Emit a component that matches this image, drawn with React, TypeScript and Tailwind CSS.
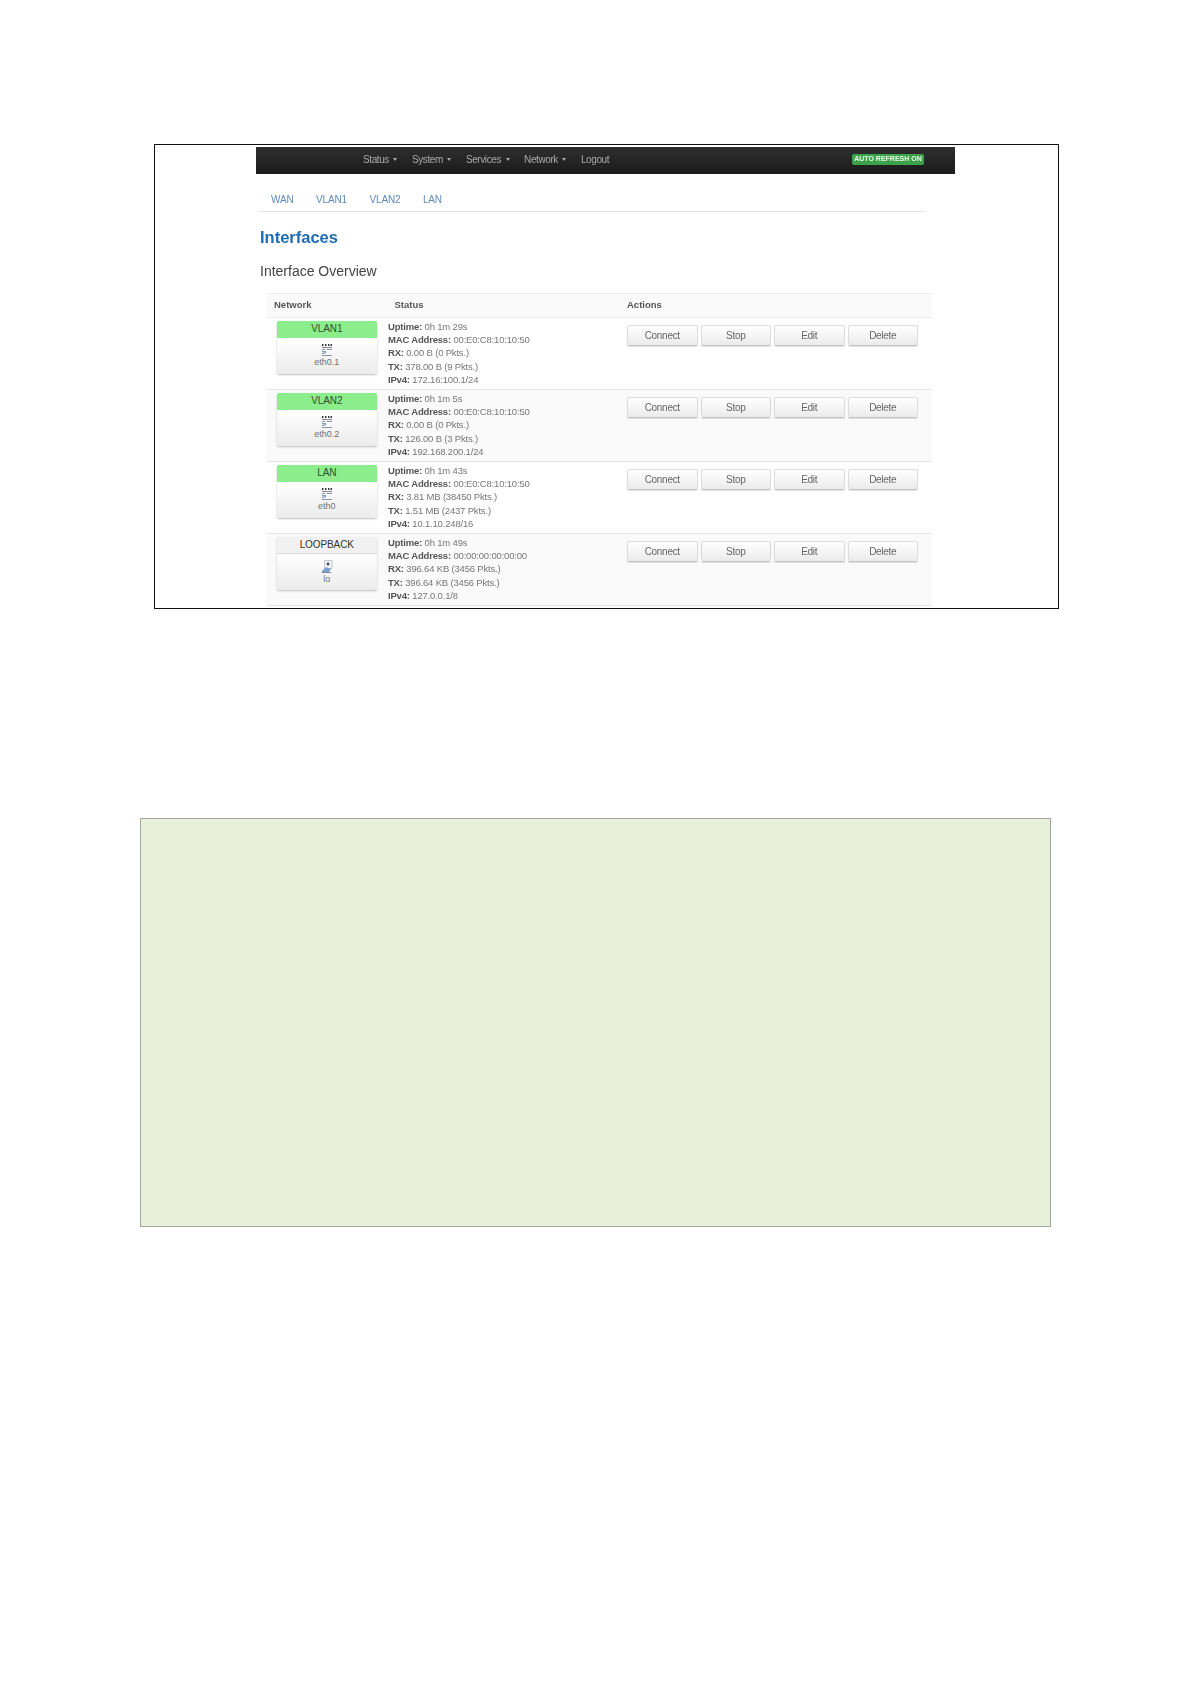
const rows = [
  {
    name: "VLAN1",
    dev: "eth0.1",
    up: true,
    uptime: "0h 1m 29s",
    mac: "00:E0:C8:10:10:50",
    rx: "0.00 B (0 Pkts.)",
    tx: "378.00 B (9 Pkts.)",
    ip: "172.16:100.1/24",
  },
  {
    name: "VLAN2",
    dev: "eth0.2",
    up: true,
    uptime: "0h 1m 5s",
    mac: "00:E0:C8:10:10:50",
    rx: "0.00 B (0 Pkts.)",
    tx: "126.00 B (3 Pkts.)",
    ip: "192.168.200.1/24",
  },
  {
    name: "LAN",
    dev: "eth0",
    up: true,
    uptime: "0h 1m 43s",
    mac: "00:E0:C8:10:10:50",
    rx: "3.81 MB (38450 Pkts.)",
    tx: "1.51 MB (2437 Pkts.)",
    ip: "10.1.10.248/16",
  },
  {
    name: "LOOPBACK",
    dev: "lo",
    up: false,
    uptime: "0h 1m 49s",
    mac: "00:00:00:00:00:00",
    rx: "396.64 KB (3456 Pkts.)",
    tx: "396.64 KB (3456 Pkts.)",
    ip: "127.0.0.1/8",
  },
];

function SwitchIcon() {
  return (
    <svg width="12" height="12" viewBox="0 0 12 12" className="block">
      <path d="M1 0h1.5v2H1zM4 0h1.5v2H4zM7 0h1.5v2H7zM9.5 0H11v2H9.5z" fill="#3a3f47" />
      <path d="M1 3h10v1H1z" fill="#7c8490" />
      <path d="M1 5h3v1H1zM6 5h5v1H6z" fill="#8d95a1" />
      <path d="M1 7h4v1H1z" fill="#7f97bd" />
      <path d="M1 9l4-1v1l-4 1z" fill="#5f82bd" />
      <path d="M1 11h10v1H1z" fill="#8d96a3" />
    </svg>
  );
}

function LoopIcon() {
  return (
    <svg width="12" height="13" viewBox="0 0 12 13" className="block">
      <path d="M3.5.5h7.5v8H3.5z" fill="#f4f5f7" stroke="#c2c6cc" />
      <circle cx="7" cy="4" r="1.4" fill="#3f454d" />
      <path d="M1 11l4-4 5 2-2 3H1z" fill="#7f9fd0" />
      <path d="M1 12.5h9" stroke="#7a8494" />
    </svg>
  );
}

function NavItem({ label, caret = true }: { label: string; caret?: boolean }) {
  return (
    <span className="flex items-center gap-[4.5px]">
      {label}
      {caret && <span className="h-0 w-0 border-x-[2.5px] border-t-[3px] border-x-transparent border-t-[#a8a8a8]" />}
    </span>
  );
}

function ActionButton({ label }: { label: string }) {
  return (
    <button className="h-[21px] w-[70.5px] rounded-[2px] border border-[#dcdcdc] border-b-[#c4c4c4] bg-gradient-to-b from-white to-[#ebebeb] text-[10px] leading-[19px] tracking-[-0.3px] text-[#666] shadow-[0_1px_1px_rgba(0,0,0,0.12)]">
      {label}
    </button>
  );
}

export default function App() {
  return (
    <div className="h-[1684px] w-[1191px] overflow-hidden bg-white pl-[154px] pt-[144px] font-['Liberation_Sans',Arial,sans-serif]">
      <div className="h-[465px] w-[905px] border-[1.5px] border-[#111] pl-[101px] pt-[1.5px]">
        <div className="blur-[0.35px]">
          <nav className="flex h-[27px] w-[699px] items-center justify-between bg-gradient-to-b from-[#2f2f2f] to-[#1b1b1b] pb-[1px] pl-[107px] pr-[31px] text-[10px] tracking-[-0.4px] text-[#a9a9a9]">
            <div className="flex gap-[14.5px]">
              <NavItem label="Status" />
              <NavItem label="System" />
              <NavItem label="Services" />
              <NavItem label="Network" />
              <NavItem label="Logout" caret={false} />
            </div>
            <span className="flex h-[11px] w-[72px] items-center justify-center whitespace-nowrap rounded-[2px] bg-[#3da34a] text-[7px] font-bold tracking-normal text-[#eef8ea]">
              AUTO REFRESH ON
            </span>
          </nav>

          <div className="ml-[4px] flex h-[38px] w-[664px] items-end gap-[22.5px] border-b border-[#e2e2e2] pb-[5px] pl-[11px] text-[10px] leading-[12px] tracking-[-0.15px] text-[#5f8aba]">
            <span>WAN</span>
            <span>VLAN1</span>
            <span>VLAN2</span>
            <span>LAN</span>
          </div>

          <h1 className="ml-[4px] mt-[15px] text-[16.5px] font-bold leading-[20px] text-[#1f6cb5]">Interfaces</h1>
          <h2 className="ml-[4px] mt-[16px] text-[14px] leading-[16px] text-[#444]">Interface Overview</h2>

          <div className="ml-[11px] mt-[14px] w-[665px] text-[#555]">
            <div className="grid h-[25px] grid-cols-[120px_233px_1fr] items-center border-y border-[#ececec] bg-[#fafafa] pl-[7px] pt-[1px] text-[9.5px] font-bold text-[#555]">
              <span>Network</span>
              <span className="pl-[0.5px]">Status</span>
              <span>Actions</span>
            </div>
            {rows.map((r, i) => (
              <div
                key={r.name}
                className={`flex h-[72px] border-b border-[#e4e4e4] ${i % 2 === 1 ? "bg-[#fafafa]" : "bg-white"}`}
              >
                <div className="ml-[9.5px] mt-[3px] h-[53.5px] w-[100.5px] overflow-hidden rounded-[2px] shadow-[0_1px_2px_rgba(0,0,0,0.25)]">
                  <div
                    className={`h-[17px] text-center text-[10px] leading-[16px] tracking-[-0.1px] ${
                      r.up ? "bg-[#8ced8c] text-[#2f4f2f]" : "border-b border-[#d8d8d8] bg-[#f1f1f1] text-[#333]"
                    }`}
                  >
                    {r.name}
                  </div>
                  <div className="flex h-[36.5px] flex-col items-center bg-gradient-to-b from-white to-[#ececec] pt-[6px] text-[9px] leading-[11px] text-[#707070]">
                    {r.up ? <SwitchIcon /> : <LoopIcon />}
                    <span className="mt-[1px]">{r.dev}</span>
                  </div>
                </div>
                <div className="ml-[11px] w-[239px] pt-[2px] text-[9.5px] leading-[13.4px] tracking-[-0.18px] text-[#777]">
                  <div>
                    <b className="text-[#555]">Uptime:</b> {r.uptime}
                  </div>
                  <div>
                    <b className="text-[#555]">MAC Address:</b> {r.mac}
                  </div>
                  <div>
                    <b className="text-[#555]">RX:</b> {r.rx}
                  </div>
                  <div>
                    <b className="text-[#555]">TX:</b> {r.tx}
                  </div>
                  <div>
                    <b className="text-[#555]">IPv4:</b> {r.ip}
                  </div>
                </div>
                <div className="mt-[7.5px] flex items-start gap-[3px]">
                  <ActionButton label="Connect" />
                  <ActionButton label="Stop" />
                  <ActionButton label="Edit" />
                  <ActionButton label="Delete" />
                </div>
              </div>
            ))}
          </div>
        </div>
      </div>

      <div className="-ml-[14px] mt-[209px] h-[409px] w-[911px] border-[1.5px] border-[#a5a89e] bg-[#e8f0db]" />
    </div>
  );
}
